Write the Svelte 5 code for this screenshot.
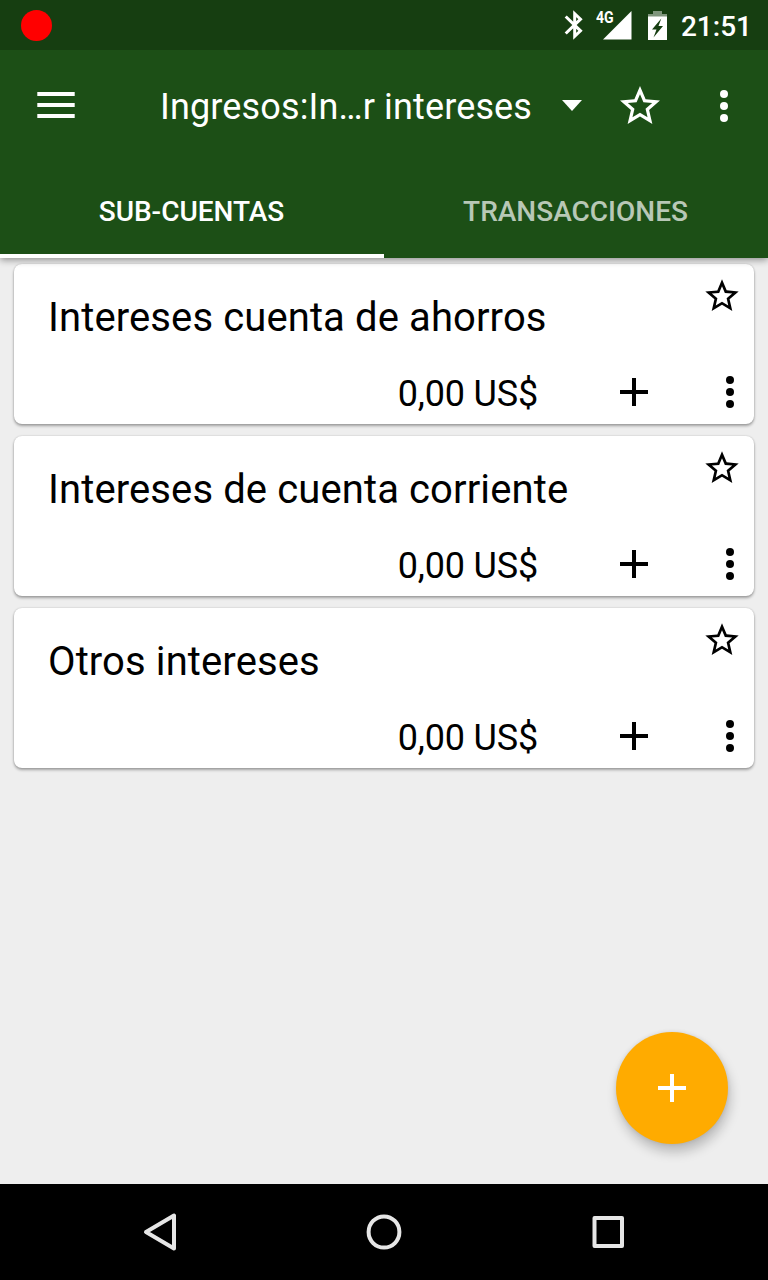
<script>
  const accounts = ['Intereses cuenta de ahorros', 'Intereses de cuenta corriente', 'Otros intereses'];
  const starPath =
    'M22 9.24l-7.19-.62L12 2 9.19 8.63 2 9.24l5.46 4.73L5.82 21 12 17.27 18.18 21l-1.63-7.03L22 9.24zM12 15.4l-3.76 2.27 1-4.28-3.32-2.88 4.38-.38L12 6.1l1.71 4.04 4.38.38-3.32 2.88 1 4.28L12 15.4z';
</script>

{#snippet dots()}
  <svg class="dots" width="8" height="32" viewBox="0 0 8 32" fill="currentColor">
    <circle cx="4" cy="4" r="4" /><circle cx="4" cy="16" r="4" /><circle cx="4" cy="28" r="4" />
  </svg>
{/snippet}

{#snippet plus()}
  <svg width="28" height="28" viewBox="0 0 28 28" fill="currentColor"><path d="M12 0h4v12h12v4H16v12h-4V16H0v-4h12z" /></svg>
{/snippet}

<div class="screen">
  <header>
    <div class="status">
      <span class="record"></span>
      <div class="indicators">
        <svg class="bluetooth" width="20" height="30" viewBox="0 0 20 30" fill="none" stroke="#fff" stroke-width="3">
          <path d="M1.7 6.500L16.500 20.800 10.700 26.300V3.700L16.500 9.200 1.700 23.500" />
        </svg>
        <div class="signal">
          <span>4G</span>
          <svg width="29" height="29" viewBox="0 0 29 29"><path d="M28.5 0v28.5H0z" fill="#fff" /></svg>
        </div>
        <svg class="battery" width="19" height="29" viewBox="0 0 19 29">
          <path d="M5 0h9v3h5v3H0V3h5z" fill="#fff" fill-opacity=".45" />
          <path d="M0 5.5h19V29H0zM13.3 7.5L4 18.5h4.5L5.5 26.5l9.5-11.500h-4.500z" fill="#fff" fill-rule="evenodd" />
        </svg>
        <time>21:51</time>
      </div>
    </div>
    <div class="toolbar">
      <svg class="menu" width="38" height="26" viewBox="0 0 38 26" fill="#fff"><path d="M.3 0h37.400v4H.3zM.3 11h37.400v4H.3zM.3 22h37.400v4H.3z" /></svg>
      <span class="title">Ingresos:In…r intereses</span>
      <svg class="caret" width="20" height="11" viewBox="0 0 20 11" fill="#fff"><path d="M0 0h20L10 11z" /></svg>
      <svg class="favorite" width="48" height="48" viewBox="0 0 24 24" fill="#fff"><path d={starPath} /></svg>
      {@render dots()}
    </div>
    <nav>
      <span class="tab active">SUB-CUENTAS</span>
      <span class="tab">TRANSACCIONES</span>
    </nav>
  </header>

  <main>
    {#each accounts as name}
      <article>
        <div class="top">
          <h2>{name}</h2>
          <svg width="40" height="40" viewBox="0 0 24 24"><path d={starPath} /></svg>
        </div>
        <div class="bottom">
          <span class="amount">0,00 US$</span>
          {@render plus()}
          {@render dots()}
        </div>
      </article>
    {/each}
    <button aria-label="+">{@render plus()}</button>
  </main>

  <footer>
    <svg width="36" height="40" viewBox="0 0 36 40"><path d="M33 3.500v33L5 20z" /></svg>
    <svg width="36" height="40" viewBox="0 0 36 40"><ellipse cx="18" cy="20" rx="15.400" ry="15.600" /></svg>
    <svg width="36" height="40" viewBox="0 0 36 40"><rect x="4.500" y="6" width="27.500" height="28" /></svg>
  </footer>
</div>

<style>
  :global(body) { margin: 0; }
  .screen {
    display: flex;
    flex-direction: column;
    width: 768px;
    height: 1280px;
    overflow: hidden;
    background: #eee;
    color: #000;
    font-family: Roboto, sans-serif;
  }
  svg { display: block; flex: none; }
  header {
    position: relative;
    z-index: 1;
    height: 258px;
    background: #1c4f16;
    color: #fff;
    box-shadow: 0 2px 7px rgba(0, 0, 0, .4);
  }
  .status {
    display: flex;
    align-items: center;
    justify-content: space-between;
    box-sizing: border-box;
    height: 50px;
    padding: 0 16px 0 20.500px;
    background: #163e11;
  }
  .record { width: 31px; height: 31px; border-radius: 50%; background: #f00; }
  .indicators { display: flex; align-items: center; }
  .signal { position: relative; margin-left: 19px; }
  .signal span {
    position: absolute;
    left: -7px;
    top: -1.500px;
    font: 700 17px/16px Roboto, sans-serif;
    transform: scaleX(.83);
    transform-origin: left;
  }
  .battery { margin-left: 16px; }
  time { margin-left: 14px; padding-top: 3px; font-size: 28px; line-height: 33px; font-weight: 500; }
  .toolbar { display: flex; align-items: center; height: 112px; padding-left: 37px; }
  .menu { margin-top: -2px; }
  .title { width: 401px; margin-left: 85px; padding-top: 2px; font-size: 36px; line-height: 44px; letter-spacing: .14px; white-space: nowrap; }
  .caret { margin-left: 1px; margin-top: -1px; }
  .favorite { margin-left: 34px; }
  .toolbar .dots { margin-left: 56px; }
  nav { display: flex; height: 96px; }
  .tab {
    flex: 1;
    box-sizing: border-box;
    border-bottom: 4px solid transparent;
    padding: 3px 1px 0 0;
    text-align: center;
    font-size: 28px;
    line-height: 93px;
    font-weight: 500;
    color: rgba(255, 255, 255, .7);
  }
  .active { color: #fff; border-color: #fff; }
  main {
    position: relative;
    display: flex;
    flex: 1;
    flex-direction: column;
    gap: 12px;
    padding: 6px 14px;
  }
  article {
    box-sizing: border-box;
    height: 160px;
    border-radius: 8px;
    background: #fff;
    box-shadow: 0 2px 3px rgba(0, 0, 0, .32), 0 0 2px rgba(0, 0, 0, .18);
  }
  .top { display: flex; justify-content: space-between; height: 98px; padding: 12px 12px 0 34px; box-sizing: border-box; }
  h2 { margin: 18px 0 0; font-size: 40px; line-height: 48px; font-weight: 400; letter-spacing: .11px; }
  .bottom { display: flex; align-items: center; justify-content: flex-end; height: 60px; padding-right: 20px; }
  .amount { padding-top: 3px; margin-right: 82px; font-size: 36px; line-height: 42px; letter-spacing: -.18px; }
  .bottom .dots { margin-left: 78px; }
  button {
    position: absolute;
    right: 40px;
    bottom: 40px;
    display: grid;
    place-items: center;
    width: 112px;
    height: 112px;
    padding: 0;
    border: 0;
    border-radius: 50%;
    background: #ffab00;
    color: #fff;
    box-shadow: 2px 8px 12px rgba(0, 0, 0, .22), 0 0 4px rgba(0, 0, 0, .1);
  }
  footer {
    display: flex;
    align-items: center;
    justify-content: space-between;
    box-sizing: border-box;
    height: 96px;
    padding: 0 142px 0 141px;
    background: #000;
  }
  footer svg { fill: none; stroke: #e6e6e6; stroke-width: 4; stroke-linejoin: round; }
</style>
